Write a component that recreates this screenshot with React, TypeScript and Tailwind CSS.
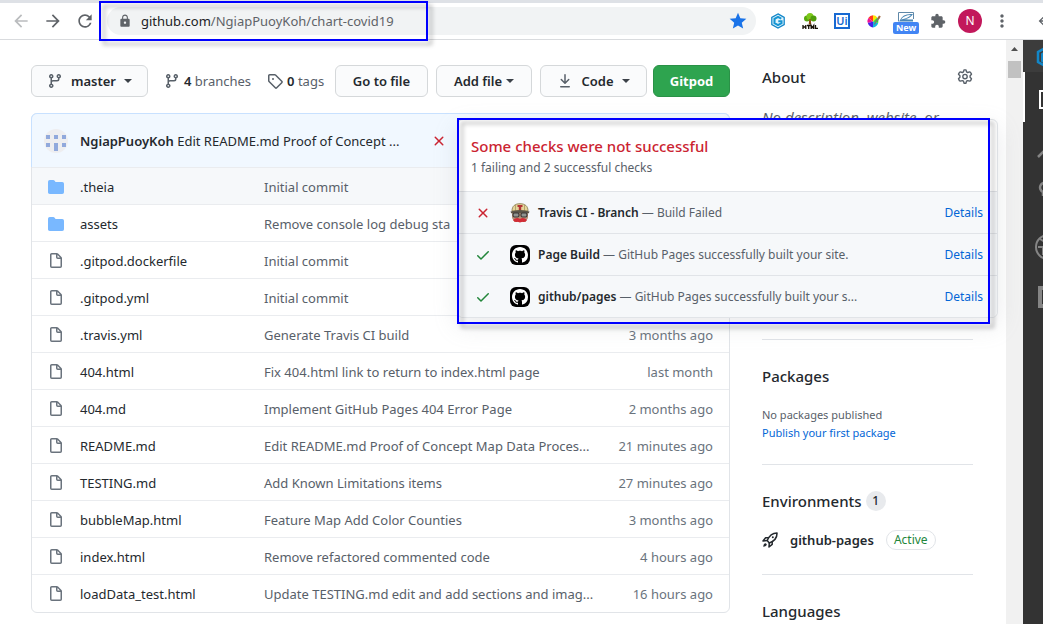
import React from "react";
import { MdArrowBack, MdArrowForward, MdRefresh, MdLock, MdStar, MdExtension, MdMoreVert } from "react-icons/md";

const paths = {
  branch:
    "M11.75 2.5a.75.75 0 100 1.5.75.75 0 000-1.5zm-2.25.75a2.25 2.25 0 113 2.122V6A2.5 2.5 0 0110 8.5H6a1 1 0 00-1 1v1.128a2.251 2.251 0 11-1.5 0V5.372a2.25 2.25 0 111.5 0v1.836A2.492 2.492 0 016 7h4a1 1 0 001-1v-.628A2.25 2.25 0 019.5 3.25zM4.25 12a.75.75 0 100 1.5.75.75 0 000-1.5zM3.5 3.25a.75.75 0 111.5 0 .75.75 0 01-1.5 0z",
  tag: "M2.5 7.775V2.75a.25.25 0 01.25-.25h5.025a.25.25 0 01.177.073l6.25 6.25a.25.25 0 010 .354l-5.025 5.025a.25.25 0 01-.354 0l-6.25-6.25a.25.25 0 01-.073-.177zm-1.5 0V2.75C1 1.784 1.784 1 2.75 1h5.025c.464 0 .91.184 1.238.513l6.25 6.25a1.75 1.75 0 010 2.474l-5.026 5.026a1.75 1.75 0 01-2.474 0l-6.25-6.25A1.75 1.75 0 011 7.775zM6 5a1 1 0 100 2 1 1 0 000-2z",
  file: "M3.75 1.5a.25.25 0 00-.25.25v11.5c0 .138.112.25.25.25h8.5a.25.25 0 00.25-.25V6H9.75A1.75 1.75 0 018 4.25V1.5H3.75zm5.75.56v2.19c0 .138.112.25.25.25h2.19L9.5 2.06zM2 1.75C2 .784 2.784 0 3.75 0h5.086c.464 0 .909.184 1.237.513l3.414 3.414c.329.328.513.773.513 1.237v8.086A1.75 1.75 0 0112.25 15h-8.5A1.75 1.75 0 012 13.25V1.75z",
  folder:
    "M1.75 1A1.75 1.75 0 000 2.75v10.5C0 14.216.784 15 1.75 15h12.5A1.75 1.75 0 0016 13.25v-8.5A1.75 1.75 0 0014.25 3h-6.5a.25.25 0 01-.2-.1l-.9-1.2c-.33-.44-.85-.7-1.4-.7h-3.5z",
  check: "M13.78 4.22a.75.75 0 010 1.06l-7.25 7.25a.75.75 0 01-1.06 0L2.22 9.28a.75.75 0 011.06-1.06L6 10.94l6.72-6.72a.75.75 0 011.06 0z",
  cross:
    "M3.72 3.72a.75.75 0 011.06 0L8 6.94l3.22-3.22a.75.75 0 111.06 1.06L9.06 8l3.22 3.22a.75.75 0 11-1.06 1.06L8 9.06l-3.22 3.22a.75.75 0 01-1.06-1.06L6.94 8 3.72 4.78a.75.75 0 010-1.06z",
  download:
    "M7.47 10.78a.75.75 0 001.06 0l3.75-3.75a.75.75 0 00-1.06-1.06L8.75 8.44V1.75a.75.75 0 00-1.5 0v6.69L4.78 5.97a.75.75 0 00-1.06 1.06l3.75 3.75zM3.75 13a.75.75 0 000 1.5h8.5a.75.75 0 000-1.5h-8.5z",
  github:
    "M8 0C3.58 0 0 3.58 0 8c0 3.54 2.29 6.53 5.47 7.59.4.07.55-.17.55-.38 0-.19-.01-.82-.01-1.49-2.01.37-2.53-.49-2.69-.94-.09-.23-.48-.94-.82-1.13-.28-.15-.68-.52-.01-.53.63-.01 1.08.58 1.23.82.72 1.21 1.87.87 2.33.66.07-.52.28-.87.51-1.07-1.78-.2-3.64-.89-3.64-3.95 0-.87.31-1.59.82-2.15-.08-.2-.36-1.02.08-2.12 0 0 .67-.21 2.2.82.64-.18 1.32-.27 2-.27.68 0 1.36.09 2 .27 1.53-1.04 2.2-.82 2.2-.82.44 1.1.16 1.92.08 2.12.51.56.82 1.27.82 2.15 0 3.07-1.87 3.75-3.65 3.95.29.25.54.73.54 1.48 0 1.07-.01 1.93-.01 2.2 0 .21.15.46.55.38A8.013 8.013 0 0016 8c0-4.42-3.58-8-8-8z",
};

function Icon({ name, className = "" }: { name: keyof typeof paths; className?: string }) {
  return (
    <svg viewBox="0 0 16 16" fill="currentColor" fillRule="evenodd" aria-hidden="true" className={`size-4 shrink-0 ${className}`}>
      <path d={paths[name]} />
    </svg>
  );
}

function Caret() {
  return (
    <svg viewBox="0 0 8 4" fill="#3b4148" aria-hidden="true" className="h-1 w-2 shrink-0">
      <path d="M0 0h8L4 4z" />
    </svg>
  );
}

function Gear() {
  return (
    <svg viewBox="0 0 16 16" fill="none" stroke="#586069" strokeWidth="1.4" strokeLinejoin="round" aria-hidden="true" className="size-4">
      <path d="M7 .9h2l.5 2 1.2.6 2-.6.9.6.9 1.7-1.4 1.5v1.6l1.4 1.5-.9 1.8-.9.5-2-.5-1.2.6-.5 2H7l-.5-2-1.2-.6-2 .5-.9-.5-.9-1.8 1.4-1.5V6.7L1.5 5.2l.9-1.7.9-.6 2 .6 1.2-.6z" />
      <circle cx="8" cy="7.6" r="2.2" />
    </svg>
  );
}

function Rocket() {
  return (
    <svg viewBox="0 0 16 16" fill="none" stroke="#24292e" strokeWidth="1.5" strokeLinejoin="round" aria-hidden="true" className="size-4">
      <path d="M5.2 8.6C7 4 10 .9 15 .9c.2 5-3 8.300-7.700 10.100z" />
      <path d="M6.600 5.800H3.600L1 9l4.200-.4M10.200 9.400v3L7 15l.3-4" />
      <circle cx="10.800" cy="5.200" r="1" fill="#24292e" stroke="none" />
      <path d="M3.700 11.200c-1.700.1-2.300 1.500-2.500 3.600 2.100-.2 3.600-.8 3.600-2.500z" fill="#24292e" stroke="none" />
    </svg>
  );
}

function Hexagon() {
  return (
    <svg viewBox="0 0 16 16" fill="none" aria-hidden="true" className="size-4 shrink-0">
      <path d="M8 .9l6.200 3.500v7.200L8 15.100l-6.200-3.500V4.400z" fill="#e2f3fb" stroke="#1287c9" strokeWidth="1.300" />
      <path d="M11.300 5.600L8 3.900 4.500 5.900v4.200L8 12.100l3.500-2V8.200H8.300" stroke="#1595d3" strokeWidth="2.100" />
    </svg>
  );
}

function TreeIcon() {
  return (
    <svg viewBox="0 0 16 16" aria-hidden="true" className="size-4 shrink-0">
      <circle cx="5" cy="5.500" r="3" fill="#58a80d" />
      <circle cx="8" cy="3.500" r="3.500" fill="#7cc81a" />
      <circle cx="11.500" cy="5.500" r="3" fill="#4f9d0b" />
      <path d="M7.300 6h1.400l.6 5.500H6.700z" fill="#8a4b12" />
      <path d="M1 12v4M3.800 12v4M1 14h2.800M5 12.500h3.500M6.700 12.500V16M9.200 16v-3.500l1.200 2 1.300-2V16M13.500 12v3.500H16" stroke="#171006" strokeWidth="1.300" fill="none" />
    </svg>
  );
}

function ColorWheel() {
  return (
    <svg viewBox="0 0 16 16" aria-hidden="true" className="size-4 shrink-0">
      <g transform="translate(1 1.500) scale(.86)">
        <path d="M7 8V1a6.500 6.500 0 015 2.500z" fill="#ffe600" />
        <path d="M7 8V1a7 7 0 00-5.500 3z" fill="#ff3b1f" />
        <path d="M7 8L1.500 4A7 7 0 001 10z" fill="#f01296" />
        <path d="M7 8l-6 2a7 7 0 006 5z" fill="#4322e8" />
        <path d="M7 8v7a7 7 0 006-5z" fill="#12b9dc" />
        <path d="M7 8l5-4.500A7 7 0 0113 10z" fill="#37dc25" />
      </g>
      <path d="M13 3.500L8.500 10 7.500 12l1.800-1 4.900-6.500z" fill="#777" />
      <path d="M13 2.500l1.800 1-2 3-1.500-1z" fill="#a3683f" />
    </svg>
  );
}

function TravisAvatar() {
  return (
    <svg viewBox="0 0 20 20" aria-hidden="true" className="size-5 shrink-0">
      <path d="M2 8C2 3 5 .7 10 .7S18 3 18 8z" fill="#e4d59a" stroke="#827347" strokeWidth=".8" />
      <path d="M5.500 2v6M14.500 2v6" stroke="#a8965f" strokeWidth=".8" />
      <path d="M7.500 2h5v2h-1.300v3H8.800V4H7.500z" fill="#b33535" />
      <path d="M2 9h16v6l-2.500 4H4.500L2 15z" fill="#b8947a" />
      <path d="M.5 8.500Q10 5.500 19.500 8.500l-.7 1.700H1.200z" fill="#5c5649" />
      <rect x="3" y="10" width="6" height="4" rx="1.500" fill="#8f9490" stroke="#3c3938" strokeWidth="1.200" />
      <rect x="11" y="10" width="6" height="4" rx="1.500" fill="#8f9490" stroke="#3c3938" strokeWidth="1.200" />
      <path d="M3 17q3.500-3.500 7-1 3.500-2.500 7 1-1.500 2.700-4.500 1.800l-2.500.7-2.500-.7Q4.500 19.700 3 17z" fill="#d22c36" />
    </svg>
  );
}

function Identicon() {
  return (
    <svg viewBox="0 0 24 24" aria-hidden="true" className="size-6 shrink-0">
      <circle cx="12" cy="12" r="12" fill="#eeeef0" />
      <path d="M2 6h4v4H2zM10 6h4v4h-4zM18 6h4v4h-4zM2 14h4v4H2zM18 14h4v4h-4zM10 14h4v8h-4z" fill="#91a9dc" />
    </svg>
  );
}

const files: [string, string, string, boolean?][] = [
  [".theia", "Initial commit", "", true],
  ["assets", "Remove console log debug sta", "", true],
  [".gitpod.dockerfile", "Initial commit", ""],
  [".gitpod.yml", "Initial commit", ""],
  [".travis.yml", "Generate Travis CI build", "3 months ago"],
  ["404.html", "Fix 404.html link to return to index.html page", "last month"],
  ["404.md", "Implement GitHub Pages 404 Error Page", "2 months ago"],
  ["README.md", "Edit README.md Proof of Concept Map Data Proces...", "21 minutes ago"],
  ["TESTING.md", "Add Known Limitations items", "27 minutes ago"],
  ["bubbleMap.html", "Feature Map Add Color Counties", "3 months ago"],
  ["index.html", "Remove refactored commented code", "4 hours ago"],
  ["loadData_test.html", "Update TESTING.md edit and add sections and imag...", "16 hours ago"],
];

const checks = [
  { name: "Travis CI - Branch", text: "Build Failed", ok: false },
  { name: "Page Build", text: "GitHub Pages successfully built your site.", ok: true },
  { name: "github/pages", text: "GitHub Pages successfully built your s...", ok: true },
];

const button = "flex h-8 shrink-0 items-center justify-center rounded-md border border-[#d5d8da] bg-[#fafbfc] font-semibold text-[#24292e]";
const marker = "pointer-events-none absolute border-2 border-[#0000ff] drop-shadow-[4px_4px_2px_rgba(0,0,0,0.3)]";

function BrowserBar() {
  return (
    <header className="relative flex h-10 shrink-0 items-center border-b border-[#d9dbde] border-t-3 border-t-[#dee1e6] bg-white pl-[11px] text-[#5f6368]">
      <button aria-label="Back" className="mr-3 text-[#babcbe]"><MdArrowBack className="size-5" /></button>
      <button aria-label="Forward" className="mr-3"><MdArrowForward className="size-5" /></button>
      <button aria-label="Reload" className="mr-3"><MdRefresh className="size-5" /></button>
      <div className="flex h-7 flex-1 items-center rounded-full bg-[#f1f3f4] pr-2 pl-[11px]">
        <MdLock className="mr-[9px] size-[14px]" />
        <a href="#url" className="flex-1"><span className="text-[#202124]">github.com</span>/NgiapPuoyKoh/chart-covid19</a>
        <button aria-label="Bookmark"><MdStar className="size-5 text-[#1a73e8]" /></button>
      </div>
      <div className="flex shrink-0 items-center gap-4 pr-[26px] pl-[14px]">
        <Hexagon />
        <TreeIcon />
        <span className="flex size-4 items-center justify-center border-2 border-[#1769d2] text-[11px] leading-3 font-semibold text-[#1769d2]">Ui</span>
        <ColorWheel />
        <span className="-mx-1 flex w-6 flex-col items-center pt-1">
          <svg viewBox="0 0 16 10" aria-hidden="true" className="h-[10px] w-4">
            <path d="M.5 9.500V.5h15v6.500" fill="none" stroke="#5f88a8" />
            <path d="M2 8Q5 1 15 2q-3 5-9 5 4 .5 9 .5v2H1z" fill="#4b87b5" />
            <path d="M3 7.500Q6 3 13 3 10 6 3 7.500z" fill="#fff" />
          </svg>
          <span className="rounded-xs bg-[#4285f4] px-[3px] text-[9px] leading-3 font-bold text-white">New</span>
        </span>
        <MdExtension className="size-4" />
        <span className="-mx-1 flex size-6 items-center justify-center rounded-full bg-[#c2185b] text-[12px] text-white">N</span>
        <MdMoreVert className="-mx-[2px] size-5" />
      </div>
      <div className="w-[7px] shrink-0 overflow-hidden"><MdArrowBack className="size-4" /></div>
      <div className={`${marker} top-[-2px] left-[99px] h-10 w-[329px]`} />
    </header>
  );
}

function ChecksPopover() {
  return (
    <section className="absolute top-[79px] left-[457px] w-[541px] rounded-md border border-[#e1e4e8] bg-white shadow-[0_8px_24px_rgba(149,157,165,0.2)]">
      <div className="px-[13px] pt-4 pb-[13px]">
        <h2 className="text-[15px] leading-5 font-medium text-[#cb2431]">Some checks were not successful</h2>
        <p className="mt-[2px] text-[12px] leading-5 text-[#586069]">1 failing and 2 successful checks</p>
      </div>
      <ul className="rounded-b-md bg-[#f6f8fa]">
        {checks.map((c) => (
          <li key={c.name} className="flex h-[42px] items-center border-t border-[#e1e4e8] pr-[14px] pl-[17px] text-[12px] text-[#586069]">
            <Icon name={c.ok ? "check" : "cross"} className={c.ok ? "text-[#22863a]" : "text-[#cb2431]"} />
            <span className="mr-2 ml-[19px] flex size-5 items-center justify-center">
              {c.ok ? <span className="flex size-5 items-center justify-center rounded-md bg-black text-white"><Icon name="github" /></span> : <TravisAvatar />}
            </span>
            <p className="flex-1"><strong className="font-semibold text-[#24292e]">{c.name}</strong> — {c.text}</p>
            <a href="#details" className="text-[#0366d6]">Details</a>
          </li>
        ))}
      </ul>
      <div className={`${marker} top-[-2px] left-[-1px] h-[206px] w-[533px]`} />
    </section>
  );
}

function Files() {
  return (
    <div className="min-w-0 flex-1">
      <div className="flex items-center">
        <button className={`${button} w-[117px] gap-2`}><Icon name="branch" className="text-[#586069]" />master<Caret /></button>
        <a href="#branches" className="ml-4 flex items-center gap-1 text-[#586069]"><Icon name="branch" /><span><strong className="font-semibold text-[#24292e]">4</strong> branches</span></a>
        <a href="#tags" className="ml-4 flex items-center gap-1 text-[#586069]"><Icon name="tag" /><span><strong className="font-semibold text-[#24292e]">0</strong> tags</span></a>
        <div className="ml-auto flex gap-2">
          <button className={`${button} w-[93px]`}>Go to file</button>
          <button className={`${button} w-24 gap-1`}>Add file<Caret /></button>
          <button className={`${button} w-[107px] gap-2`}><Icon name="download" className="text-[#586069]" />Code<Caret /></button>
        </div>
        <button className="ml-[6px] h-8 w-[77px] rounded-md border border-[#2a9147] bg-[#2ea44f] font-bold text-white">Gitpod</button>
      </div>
      <div className="mt-4 rounded-md border border-[#e1e4e8] pb-px">
        <div className="-mx-px -mt-px flex h-[54px] items-center rounded-t-md border border-b-0 border-[#c8e1ff] bg-[#f1f8ff] pl-3">
          <Identicon />
          <p className="ml-3 w-[327px] text-[#24292e]"><strong className="font-semibold">NgiapPuoyKoh</strong> Edit README.md Proof of Concept ...</p>
          <Icon name="cross" className="ml-6 text-[#cb2431]" />
        </div>
        <table className="w-full table-fixed border-separate border-spacing-0 [&_td]:border-t [&_td]:border-[#eaecef] [&_td]:pt-[2px]">
          <tbody>
            {files.map(([name, message, age, dir], i) => (
              <tr key={name} className={`h-[37px] ${i === 0 ? "bg-[#f6f8fa]" : ""}`}>
                <td className="w-12 pl-4"><Icon name={dir ? "folder" : "file"} className={dir ? "text-[#79b8ff]" : "text-[#6a737d]"} /></td>
                <td className="w-[184px]"><a href="#file" className="text-[#24292e]">{name}</a></td>
                <td className="whitespace-nowrap"><a href="#commit" className="text-[#586069]">{message}</a></td>
                <td className="w-[124px] pr-4 text-right whitespace-nowrap text-[#6a737d]">{age}</td>
              </tr>
            ))}
          </tbody>
        </table>
      </div>
    </div>
  );
}

function Sidebar() {
  const heading = "text-[15px] leading-6 font-medium text-[#24292e]";
  return (
    <aside className="w-[211px] shrink-0">
      <div className="flex items-center justify-between"><h2 className={heading}>About</h2><button aria-label="Edit details"><Gear /></button></div>
      <p className="mt-4 h-[234px] text-[15px] leading-6 text-[#586069] italic">No description, website, or</p>
      <section className="border-t border-[#e1e4e8] pt-6 pb-[22px]">
        <h2 className={heading}>Packages</h2>
        <p className="mt-[18px] text-[11px] leading-[18px] text-[#586069]">No packages published</p>
        <a href="#publish" className="block text-[11px] leading-[18px] text-[#0366d6]">Publish your first package</a>
      </section>
      <section className="border-t border-[#e1e4e8] pt-6 pb-6">
        <h2 className={`${heading} flex items-center gap-1`}>Environments <span className="flex size-5 items-center justify-center rounded-full bg-[#e8eaed] text-[12px] font-medium">1</span></h2>
        <div className="mt-[17px] flex h-5 items-center">
          <Rocket />
          <a href="#pages" className="ml-3 font-semibold text-[#24292e]">github-pages</a>
          <span className="ml-3 rounded-full border border-[#e1e4e8] px-[7px] text-[12px] leading-[18px] text-[#22863a]">Active</span>
        </div>
      </section>
      <section className="border-t border-[#e1e4e8] pt-6"><h2 className={heading}>Languages</h2></section>
    </aside>
  );
}

function EditorStrip() {
  return (
    <div className="w-5 shrink-0 overflow-hidden bg-[#333]">
      <svg viewBox="0 0 20 280" fill="none" aria-hidden="true" className="h-[280px] w-5">
        <path d="M0 0h20v32H0z" fill="#3c3c3c" />
        <path d="M0 32h2v50H0z" fill="#fff" />
        <path d="M24 7l-9 5v10l9 5" stroke="#1287c9" strokeWidth="2.500" />
        <path d="M22 12l-3 2v7l3 2" stroke="#1287c9" strokeWidth="2" />
        <path d="M24 51h-7v17h7" stroke="#fff" strokeWidth="2" />
        <path d="M15 117l9-9M24 143a4 4 0 10-4 9v4" stroke="#858585" strokeWidth="2.500" />
        <circle cx="25" cy="207" r="12" stroke="#858585" strokeWidth="2" />
        <path d="M15 207h10M17 199l5 3M20 207v8" stroke="#858585" strokeWidth="2" />
        <path d="M24 248h-7v18h7" stroke="#858585" strokeWidth="4" />
      </svg>
    </div>
  );
}

export default function App() {
  return (
    <div className="flex h-screen flex-col overflow-hidden bg-white font-['Noto_Sans','Open_Sans',sans-serif] text-[13px] leading-5">
      <BrowserBar />
      <div className="relative flex min-h-0 flex-1">
        <main className="flex min-w-0 flex-1 items-start gap-8 overflow-hidden pt-[25px] pr-[33px] pl-[31px]">
          <Files />
          <Sidebar />
        </main>
        <div className="w-[17px] shrink-0 bg-[#f1f1f1]">
          <svg viewBox="0 0 17 40" aria-hidden="true" className="h-10 w-[17px]"><path d="M5 11l3.500-4 3.500 4z" fill="#505050" /><path d="M2 21h13v17H2z" fill="#c1c1c1" /></svg>
        </div>
        <EditorStrip />
        <ChecksPopover />
      </div>
    </div>
  );
}
